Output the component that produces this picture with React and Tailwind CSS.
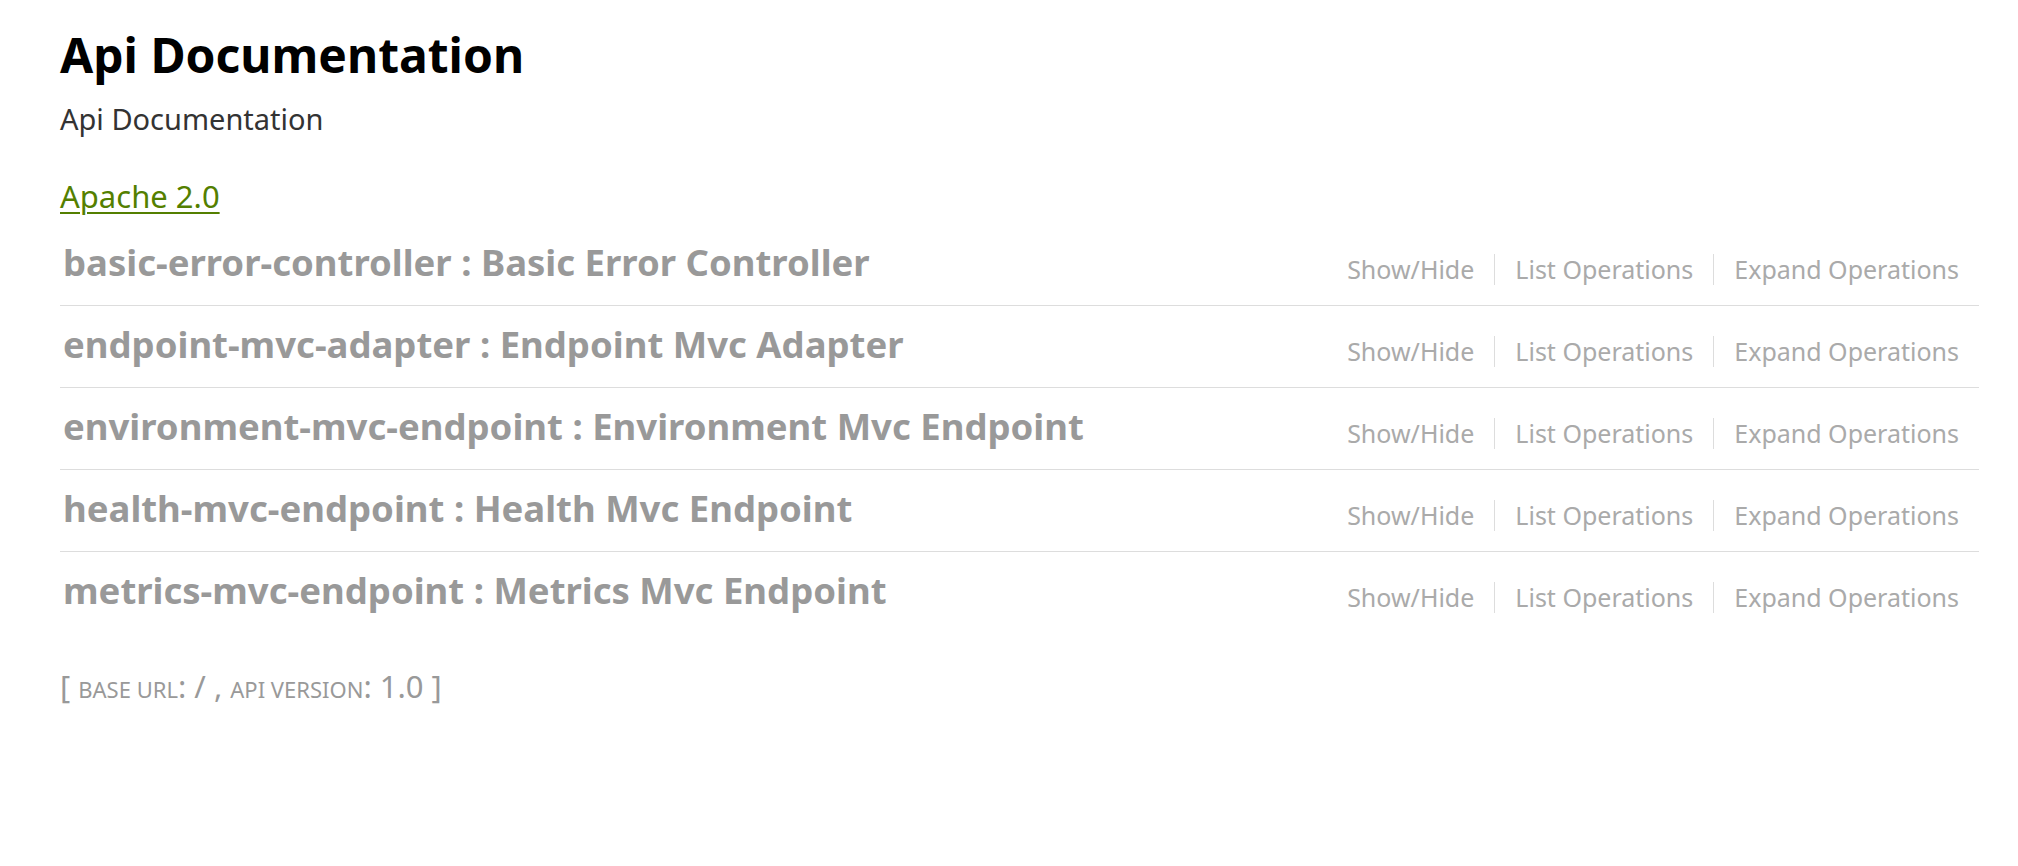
const resources = [
  { name: 'basic-error-controller', desc: 'Basic Error Controller' },
  { name: 'endpoint-mvc-adapter', desc: 'Endpoint Mvc Adapter' },
  { name: 'environment-mvc-endpoint', desc: 'Environment Mvc Endpoint' },
  { name: 'health-mvc-endpoint', desc: 'Health Mvc Endpoint' },
  { name: 'metrics-mvc-endpoint', desc: 'Metrics Mvc Endpoint' },
]

function Resource({ name, desc, last }) {
  return (
    <li className={`flex justify-between h-[82px] ${last ? '' : 'border-b border-[#ddd]'}`}>
      <h2 className="pt-[20px] pl-[3px] text-[36.5px] leading-[36px] font-bold text-[#999]">
        <a href="#">{name} : {desc}</a>
      </h2>
      <ul className="flex items-start pt-[30px] pr-[20px] text-[25px] leading-[31px] text-[#aaa]">
        <li className="px-[20px] border-r border-[#ddd]">
          <a href="#">Show/Hide</a>
        </li>
        <li className="px-[20px] border-r border-[#ddd]">
          <a href="#">List Operations</a>
        </li>
        <li className="pl-[20px]">
          <a href="#">Expand Operations</a>
        </li>
      </ul>
    </li>
  )
}

export default function App() {
  return (
    <div className="min-h-screen bg-white" style={{ fontFamily: '"Noto Sans", "Open Sans", sans-serif' }}>
      <div className="ml-[60px] w-[1919px] pt-[31px]">
        {/* Info */}
        <h1 className="text-[48px] leading-[48px] font-bold text-black">Api Documentation</h1>
        <div className="mt-[25px] text-[29px] leading-[29px] text-[#333]">Api Documentation</div>
        <div className="mt-[48px] text-[31px] leading-[31px]">
          <a href="#" className="text-[#547f00] underline underline-offset-[4px] decoration-[2px]">Apache 2.0</a>
        </div>

        {/* Resources */}
        <ul className="mt-[12px]">
          {resources.map((r, i) => (
            <Resource key={r.name} {...r} last={i === resources.length - 1} />
          ))}
        </ul>

        {/* Footer */}
        <div className="mt-[37px] text-[31px] leading-[31px] text-[#999]">
          [ <span className="uppercase text-[22px]">base url</span>: / , <span className="uppercase text-[22px]">api version</span>: 1.0 ]
        </div>
      </div>
    </div>
  )
}
